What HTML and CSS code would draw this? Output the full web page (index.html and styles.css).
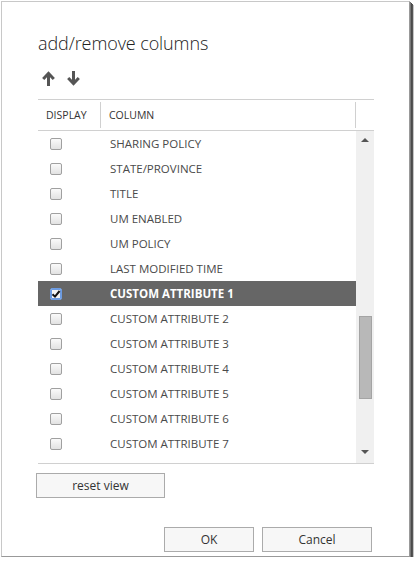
FILE: index.html
```html
<!DOCTYPE html>
<html>
<head>
<meta charset="utf-8">
<link rel="stylesheet" href="styles.css">
</head>
<body>
<div class="dialog">
  <h1 class="title">add/remove columns</h1>
  <div class="tools">
    <svg class="arrow" width="13" height="15" viewBox="0 0 13 15"><path d="M6.5 15V3M1.2 8L6.5 2.4 11.8 8" fill="none" stroke="#555" stroke-width="3"/></svg>
    <svg class="arrow" width="13" height="15" viewBox="0 0 13 15"><path d="M6.5 0V12M1.2 7L6.5 12.6 11.8 7" fill="none" stroke="#555" stroke-width="3"/></svg>
  </div>
  <div class="grid">
    <div class="head">
      <div class="h-display">DISPLAY</div>
      <div class="h-column">COLUMN</div>
      <div class="h-scroll"></div>
    </div>
    <div class="body">
      <div class="rows">
        <div class="row"><span class="cb"></span><span class="name">SHARING POLICY</span></div>
        <div class="row"><span class="cb"></span><span class="name">STATE/PROVINCE</span></div>
        <div class="row"><span class="cb"></span><span class="name">TITLE</span></div>
        <div class="row"><span class="cb"></span><span class="name">UM ENABLED</span></div>
        <div class="row"><span class="cb"></span><span class="name">UM POLICY</span></div>
        <div class="row"><span class="cb"></span><span class="name">LAST MODIFIED TIME</span></div>
        <div class="row selected"><span class="cb checked"><svg width="10" height="10" viewBox="0 0 10 10"><path d="M1.5 5.2L4 7.6 8.6 2" fill="none" stroke="#111" stroke-width="2"/></svg></span><span class="name">CUSTOM ATTRIBUTE 1</span></div>
        <div class="row"><span class="cb"></span><span class="name">CUSTOM ATTRIBUTE 2</span></div>
        <div class="row"><span class="cb"></span><span class="name">CUSTOM ATTRIBUTE 3</span></div>
        <div class="row"><span class="cb"></span><span class="name">CUSTOM ATTRIBUTE 4</span></div>
        <div class="row"><span class="cb"></span><span class="name">CUSTOM ATTRIBUTE 5</span></div>
        <div class="row"><span class="cb"></span><span class="name">CUSTOM ATTRIBUTE 6</span></div>
        <div class="row"><span class="cb"></span><span class="name">CUSTOM ATTRIBUTE 7</span></div>
        <div class="row"><span class="cb"></span><span class="name">CUSTOM ATTRIBUTE 8</span></div>
      </div>
      <div class="scrollbar">
        <div class="sb-up"></div>
        <div class="sb-track"><div class="sb-thumb"></div></div>
        <div class="sb-down"></div>
      </div>
    </div>
  </div>
  <button class="btn reset">reset view</button>
  <div class="footer">
    <button class="btn ok">OK</button>
    <button class="btn cancel">Cancel</button>
  </div>
</div>
</body>
</html>
```
FILE: styles.css
```css
html, body { margin: 0; padding: 0; background: #fff; }
body { font-family: "Open Sans", "Noto Sans", sans-serif; color: #333; }
.dialog {
  box-sizing: border-box;
  margin: 1px 0 0 1px;
  width: 409px;
  height: 556px;
  border: 1px solid #c8c8c8;
  border-right-color: #999;
  border-bottom-color: #999;
  box-shadow: 1px 1px 0 #777, 2px 2px 0 #4a4a4a, 3px 3px 0 #555, 4px 4px 0 #c4c4c4;
  padding: 0 37px 0 35px;
  display: flex;
  flex-direction: column;
}
.title {
  margin: 29px 0 0 1px;
  font-size: 18px;
  font-weight: 300;
  color: #222;
  line-height: 24px;
  letter-spacing: -0.1px;
}
.tools {
  display: flex;
  gap: 12px;
  margin: 15px 0 0 5px;
  height: 16px;
  align-items: center;
}
.grid {
  margin-top: 13px;
  margin-left: 1px;
  width: 336px;
}
.head {
  display: flex;
  height: 30px;
  border-top: 1px solid #d0d0d0;
  border-bottom: 1px solid #d0d0d0;
  font-size: 10.5px;
  color: #333;
}
.head > div { display: flex; align-items: center; }
.h-display { width: 63px; padding-left: 8px; box-sizing: border-box; border-right: 1px solid #d0d0d0; margin: 2px 0; }
.h-column { width: 255px; padding-left: 8px; box-sizing: border-box; border-right: 1px solid #d0d0d0; margin: 2px 0; }
.h-scroll { flex: 1; }
.body {
  display: flex;
  height: 332px;
  overflow: hidden;
  border-bottom: 1px solid #d0d0d0;
}
.rows { width: 318px; }
.row {
  height: 25px;
  display: flex;
  align-items: center;
  font-size: 11.5px;
  color: #4a4a4a;
}
.row .cb {
  box-sizing: border-box;
  width: 12px; height: 12px;
  margin-left: 12px;
  border: 1px solid #a0a0a0;
  border-radius: 2px;
  background: linear-gradient(#fafafa, #e2e2e2);
  display: flex; align-items: center; justify-content: center;
}
.row .name { margin-left: 48px; white-space: nowrap; }
.row.selected { background: #666; color: #fff; font-weight: 700; }
.row .cb.checked { border: 1px solid #6d9be0; box-shadow: 0 0 0 1px #6d9be0 inset; background: #f4f4f4; }
.scrollbar {
  width: 18px;
  background: #f0f0f0;
  display: flex;
  flex-direction: column;
  align-items: center;
}
.sb-up {
  margin-top: 7px;
  width: 0; height: 0;
  border-left: 4px solid transparent;
  border-right: 4px solid transparent;
  border-bottom: 4px solid #555;
}
.sb-track { flex: 1; width: 100%; display: flex; flex-direction: column; align-items: center; }
.sb-thumb {
  margin-top: 174px;
  box-sizing: border-box;
  width: 13px;
  height: 83px;
  background: #b8b8b8;
  border: 1px solid #a4a4a4;
}
.sb-down {
  margin-bottom: 9px;
  width: 0; height: 0;
  border-left: 4px solid transparent;
  border-right: 4px solid transparent;
  border-top: 4px solid #555;
}
.btn {
  font-family: "Open Sans", "Noto Sans", sans-serif;
  font-size: 12px;
  color: #333;
  background: #f7f7f7;
  border: 1px solid #ababab;
  height: 25px;
  padding: 0;
}
.reset { width: 129px; margin-top: 9px; margin-left: -1px; }
.footer {
  margin-top: auto;
  margin-bottom: 4px;
  display: flex;
  justify-content: flex-end;
  gap: 8px;
}
.ok { width: 90px; }
.cancel { width: 110px; }
```
